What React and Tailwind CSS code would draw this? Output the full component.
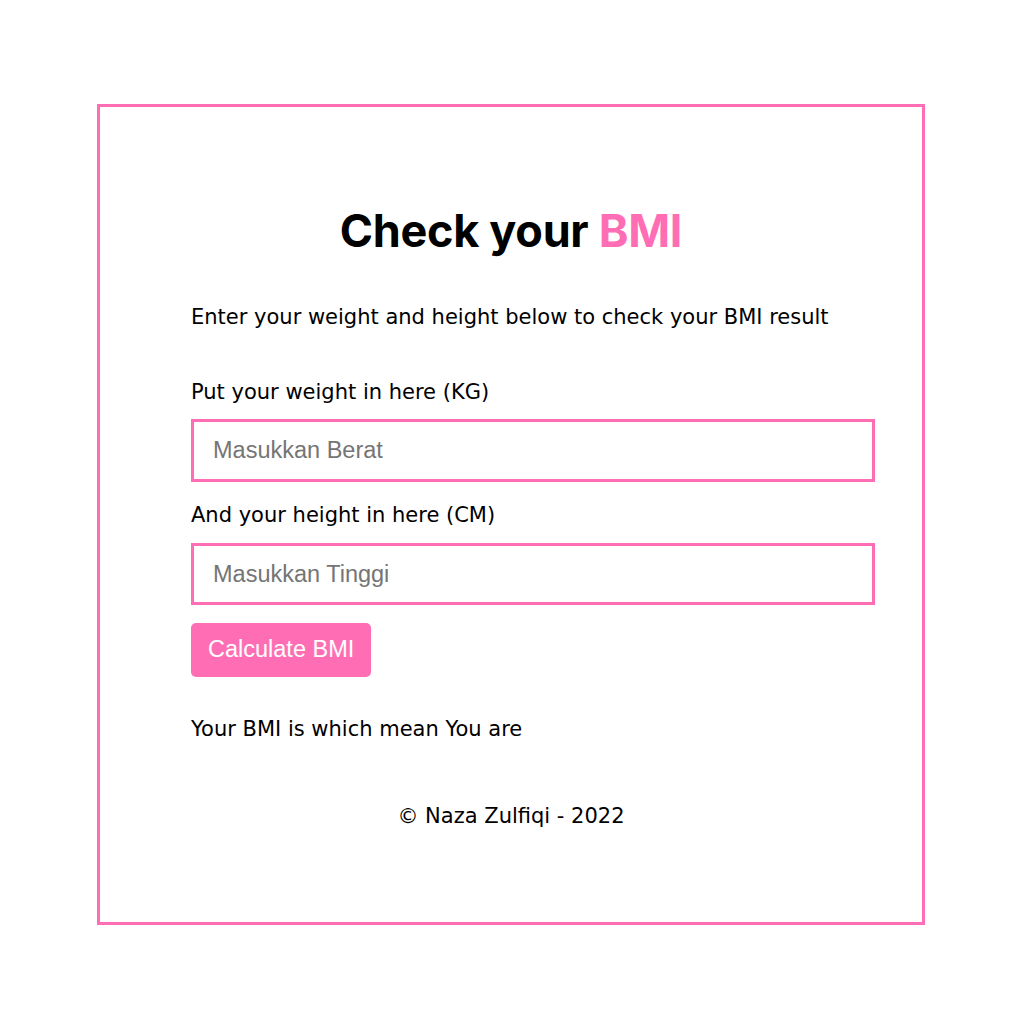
import { useState } from 'react'

const heading = { fontFamily: 'Inter, "Noto Sans", sans-serif' }
const body = { fontFamily: '"DejaVu Sans", "Noto Sans", sans-serif' }
const arial = { fontFamily: '"Liberation Sans", Arial, sans-serif' }

const App = () => {
  const [berat, setBerat] = useState('')
  const [tinggi, setTinggi] = useState('')

  return (
    <div className="min-h-screen bg-white pt-[104px]" style={body}>
      {/* Card */}
      <div className="ml-[97px] w-[828px] border-[3px] border-[#ff6eb4] pt-[96px] pb-[92px] text-black">
        <div className="mx-auto w-[640px]">
          <h1 className="text-center text-[45px] font-bold leading-[56px] tracking-[-0.3px]" style={heading}>
            Check your <span className="text-[#ff6eb4]">BMI</span>
          </h1>

          <p className="mt-[44px] text-[21px] leading-[28px]">
            Enter your weight and height below to check your BMI result
          </p>

          <p className="mt-[47px] text-[21px] leading-[28px]">Put your weight in here (KG)</p>
          <input
            type="text"
            value={berat}
            onChange={(e) => setBerat(e.target.value)}
            placeholder="Masukkan Berat"
            className="mt-[13px] block h-[63px] w-[684px] border-[3px] border-[#ff6eb4] pl-[19px] text-[23.5px] outline-none placeholder:text-[#757575]"
            style={arial}
          />

          <p className="mt-[19px] text-[21px] leading-[28px]">And your height in here (CM)</p>
          <input
            type="text"
            value={tinggi}
            onChange={(e) => setTinggi(e.target.value)}
            placeholder="Masukkan Tinggi"
            className="mt-[14px] block h-[62px] w-[684px] border-[3px] border-[#ff6eb4] pl-[19px] text-[23.5px] outline-none placeholder:text-[#757575]"
            style={arial}
          />

          <button
            className="mt-[18px] block h-[54px] rounded-[5px] bg-[#ff6eb4] px-[17px] text-[23.5px] text-white"
            style={arial}
          >
            Calculate BMI
          </button>

          <p className="mt-[38px] text-[21px] leading-[28px]">Your BMI is which mean You are</p>

          <p className="mt-[59px] text-center text-[21px] leading-[28px]">© Naza Zulfiqi - 2022</p>
        </div>
      </div>
    </div>
  )
}

export default App
